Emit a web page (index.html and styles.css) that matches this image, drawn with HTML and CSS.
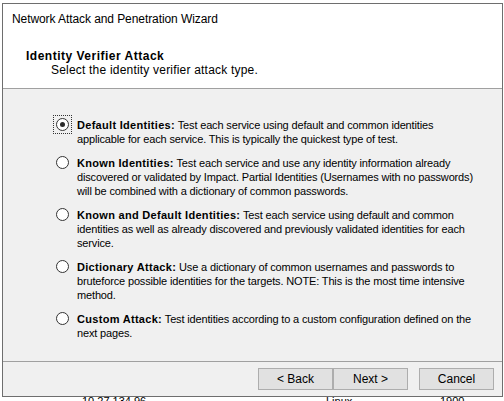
FILE: index.html
```html
<!DOCTYPE html>
<html>
<head>
<meta charset="utf-8">
<link rel="stylesheet" href="styles.css">
</head>
<body>
<div class="desktop">
  <div class="behind">
    <span class="cell c1">10.27.134.96</span>
    <span class="cell c2">Linux</span>
    <span class="cell c3">1900</span>
  </div>
  <div class="window">
    <div class="titlebar">Network Attack and Penetration Wizard</div>
    <div class="header">
      <div class="h-title">Identity Verifier Attack</div>
      <div class="h-sub">Select the identity verifier attack type.</div>
    </div>
    <div class="content">
      <div class="option">
        <span class="radio-wrap focus"><span class="radio checked"></span></span>
        <div class="text"><b>Default Identities:</b> Test each service using default and common identities<br>applicable for each service. This is typically the quickest type of test.</div>
      </div>
      <div class="option">
        <span class="radio-wrap"><span class="radio"></span></span>
        <div class="text"><b>Known Identities:</b> Test each service and use any identity information already<br>discovered or validated by Impact. Partial Identities (Usernames with no passwords)<br>will be combined with a dictionary of common passwords.</div>
      </div>
      <div class="option">
        <span class="radio-wrap"><span class="radio"></span></span>
        <div class="text"><b>Known and Default Identities:</b> Test each service using default and common<br>identities as well as already discovered and previously validated identities for each<br>service.</div>
      </div>
      <div class="option">
        <span class="radio-wrap"><span class="radio"></span></span>
        <div class="text"><b>Dictionary Attack:</b> Use a dictionary of common usernames and passwords to<br>bruteforce possible identities for the targets. NOTE: This is the most time intensive<br>method.</div>
      </div>
      <div class="option">
        <span class="radio-wrap"><span class="radio"></span></span>
        <div class="text"><b>Custom Attack:</b> Test identities according to a custom configuration defined on the<br>next pages.</div>
      </div>
    </div>
    <div class="footer">
      <button class="btn">&lt; Back</button>
      <button class="btn">Next &gt;</button>
      <button class="btn cancel">Cancel</button>
    </div>
  </div>
</div>
</body>
</html>
```
FILE: styles.css
```css
html, body {
  margin: 0;
  padding: 0;
  background: #ffffff;
}
body {
  font-family: "Liberation Sans", Arial, sans-serif;
  font-size: 12px;
  color: #000;
  width: 504px;
  height: 401px;
  overflow: hidden;
}
.desktop {
  position: relative;
  width: 504px;
  height: 401px;
}
.behind {
  position: absolute;
  left: 0;
  top: 394px;
  width: 504px;
  height: 14px;
  line-height: 14px;
  font-size: 11px;
}
.cell {
  position: absolute;
  top: 0;
}
.c1 { left: 82px; }
.c2 { left: 326px; }
.c3 { left: 440px; }
.window {
  position: absolute;
  left: 2px;
  top: 3px;
  width: 499px;
  height: 392px;
  border: 1px solid #6e6e6e;
  background: #f0f0f0;
  display: flex;
  flex-direction: column;
}
.titlebar {
  background: #fff;
  height: 29px;
  padding: 8px 0 0 9px;
  box-sizing: border-box;
  line-height: 14px;
  letter-spacing: -0.08px;
}
.header {
  background: #fff;
  height: 56px;
  box-sizing: border-box;
  padding: 16px 0 0 23px;
  border-bottom: 1px solid #a0a0a0;
  line-height: 14px;
}
.h-title {
  font-weight: bold;
  letter-spacing: 0.5px;
}
.h-sub {
  padding-left: 25px;
  letter-spacing: 0.2px;
}
.content {
  flex: 1;
  padding: 29px 0 0 50px;
  display: flex;
  flex-direction: column;
  gap: 10px;
  background: #f0f0f0;
}
.option {
  display: flex;
  align-items: flex-start;
}
.radio-wrap {
  flex-shrink: 0;
  width: 19px;
  height: 19px;
  box-sizing: border-box;
  display: flex;
  align-items: center;
  justify-content: center;
  margin-top: -3px;
  margin-right: 5px;
  border: 1px dotted transparent;
}
.radio-wrap.focus {
  border-color: #333;
}
.radio {
  width: 13px;
  height: 13px;
  box-sizing: border-box;
  border: 1px solid #333;
  border-radius: 50%;
  background: #fff;
  display: flex;
  align-items: center;
  justify-content: center;
}
.radio.checked::after {
  content: "";
  width: 5px;
  height: 5px;
  border-radius: 50%;
  background: #2a2a2a;
}
.text {
  font-size: 11px;
  line-height: 14px;
  white-space: nowrap;
  letter-spacing: -0.15px;
}
.text b {
  letter-spacing: 0.3px;
}
.footer {
  height: 35px;
  border-top: 1px solid #a0a0a0;
  box-sizing: border-box;
  display: flex;
  justify-content: flex-end;
  align-items: flex-start;
  padding: 6px 8px 0 0;
}
.btn {
  flex-shrink: 0;
  width: 75px;
  height: 22px;
  font-family: "Liberation Sans", Arial, sans-serif;
  font-size: 12px;
  color: #000;
  background: #e1e1e1;
  border: 1px solid #adadad;
  padding: 0;
  margin: 0;
}
.btn.cancel {
  margin-left: 11px;
}
```
